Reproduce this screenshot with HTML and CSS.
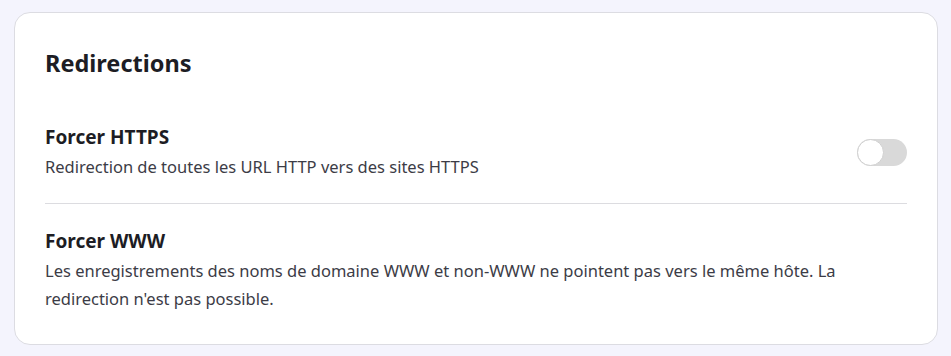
FILE: index.html
```html
<!DOCTYPE html>
<html lang="fr">
<head>
    <meta charset="UTF-8">
    <meta name="viewport" content="width=device-width, initial-scale=1.0">
    <title>Redirections</title>
    <link rel="stylesheet" href="styles.css">
</head>
<body>
    <div class="card">
        <h2 class="card-title">Redirections</h2>

        <div class="setting">
            <div class="setting-text">
                <h3>Forcer HTTPS</h3>
                <p>Redirection de toutes les URL HTTP vers des sites HTTPS</p>
            </div>
            <label class="switch">
                <input type="checkbox">
                <span class="slider"></span>
            </label>
        </div>

        <div class="setting">
            <div class="setting-text">
                <h3>Forcer WWW</h3>
                <p>Les enregistrements des noms de domaine WWW et non-WWW ne pointent pas vers le même hôte. La redirection n'est pas possible.</p>
            </div>
        </div>
    </div>
</body>
</html>
```

FILE: styles.css
```css
body {
    background: #f4f4fd;
    font-family: 'Noto Sans', 'Open Sans', sans-serif;
    color: #1d1d24;
    margin: 0;
    padding: 12px 13px 11px 14px;
}

.card {
    background: #fff;
    border: 1px solid #dcdce2;
    border-radius: 16px;
    padding: 34px 30px 31px 30px;
}

.card-title {
    font-size: 23.5px;
    font-weight: 700;
    line-height: 32px;
    margin: 0 0 45px 0;
}

.setting {
    display: flex;
    align-items: center;
    justify-content: space-between;
    gap: 40px;
    padding: 0 0 22px 0;
}

.setting + .setting {
    border-top: 1px solid #dcdce0;
    padding-top: 24px;
    padding-bottom: 0;
}

.setting-text h3 {
    font-size: 19px;
    font-weight: 700;
    line-height: 26px;
    margin: 0 0 3px 0;
}

.setting-text p {
    font-size: 16.5px;
    line-height: 28px;
    color: #3c3c46;
    margin: 0;
}

.switch {
    position: relative;
    display: inline-block;
    width: 50px;
    height: 27px;
    flex-shrink: 0;
}

.switch input {
    opacity: 0;
    width: 0;
    height: 0;
}

.slider {
    position: absolute;
    inset: 0;
    background: #d9d9d9;
    border-radius: 14px;
    cursor: pointer;
}

.slider::before {
    content: "";
    position: absolute;
    left: 0;
    top: 0;
    width: 25px;
    height: 25px;
    background: #fff;
    border: 1px solid #d0d0d0;
    border-radius: 50%;
}
```
